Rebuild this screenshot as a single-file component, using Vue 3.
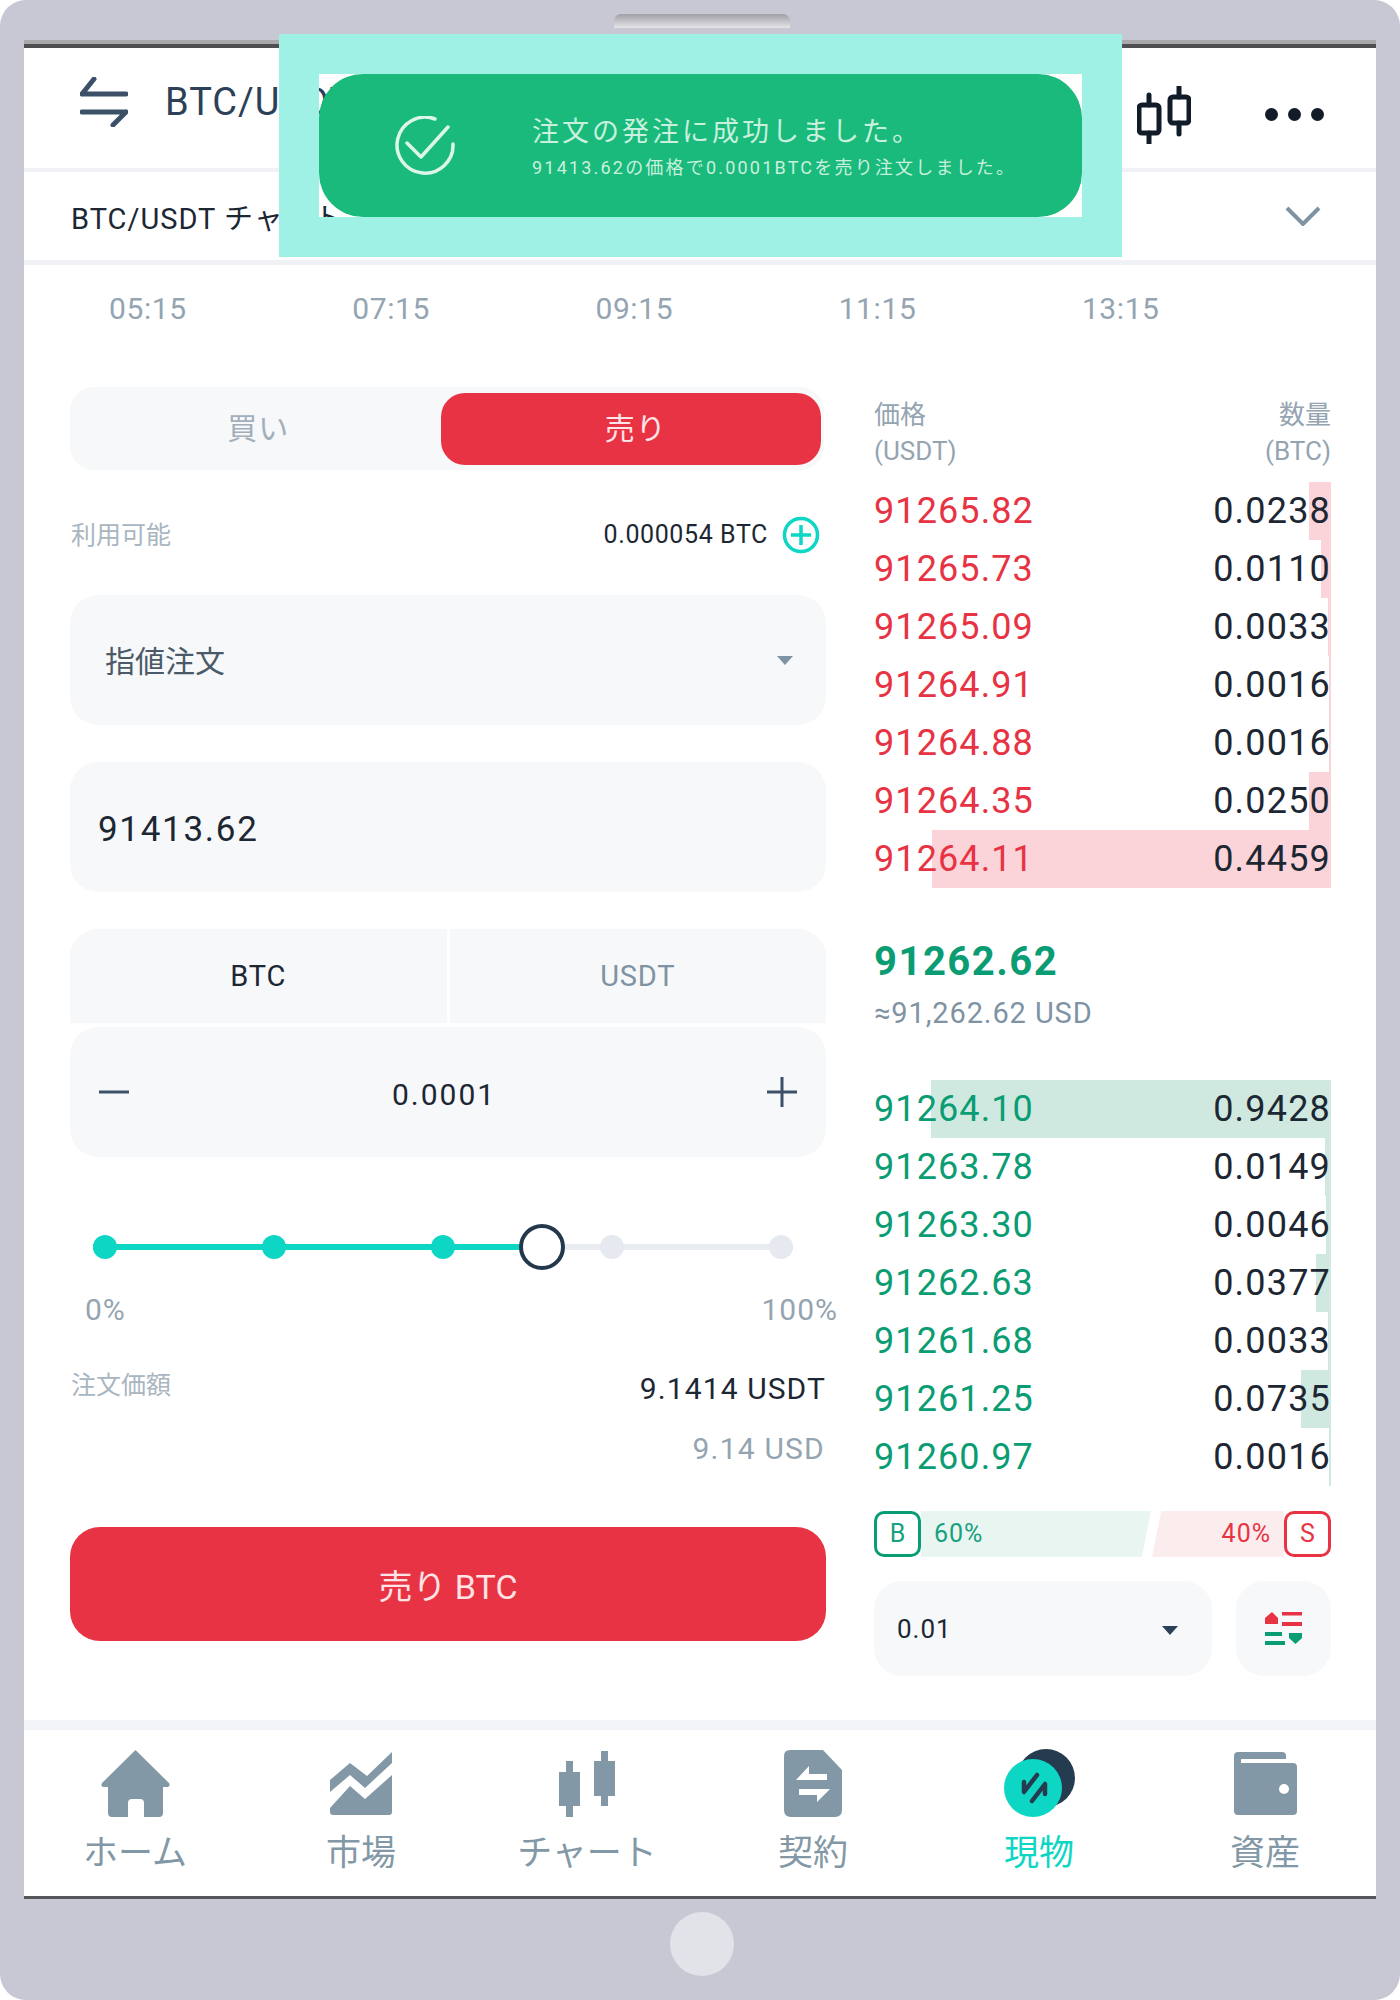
<template>
  <div class="device">
    <div class="notch"></div>

    <div class="screen">
      <header class="top-bar">
        <svg class="swap-icon" viewBox="0 0 48 50" width="48" height="50">
          <path d="M2 17L14 2M2 17H46M46 35H2M46 35L33 48" />
        </svg>
        <span class="pair">BTC/USDT</span>
        <svg class="candle-icon" viewBox="0 0 54 58" width="54" height="58">
          <rect x="2" y="19" width="20" height="28" rx="3" />
          <rect x="33" y="11" width="19" height="26" rx="3" />
          <path d="M12 9V19M12 47V57M42 1V11M42 37V48" />
        </svg>
        <div class="dots"><i></i><i></i><i></i></div>
      </header>

      <div class="chart-row">
        <span>BTC/USDT チャート</span>
        <svg viewBox="0 0 36 20" width="36" height="20">
          <path d="M2 2L18 18L34 2" />
        </svg>
      </div>

      <div class="times">
        <span v-for="t in times" :key="t">{{ t }}</span>
      </div>

      <main class="trade">
        <section class="form">
          <div class="side-tabs">
            <span class="side">買い</span>
            <span class="side active">売り</span>
          </div>

          <div class="avail">
            <span class="muted">利用可能</span>
            <div class="avail-right">
              <span>0.000054 BTC</span>
              <svg viewBox="0 0 38 38" width="38" height="38">
                <circle cx="19" cy="19" r="16.5" />
                <path d="M19 9V29M9 19H29" />
              </svg>
            </div>
          </div>

          <div class="field select">
            <span>指値注文</span>
            <i class="caret grey"></i>
          </div>

          <div class="field price">91413.62</div>

          <div class="unit-tabs">
            <span>BTC</span>
            <span class="off">USDT</span>
          </div>

          <div class="field qty">
            <svg viewBox="0 0 30 30" width="30" height="30"><path d="M0 15H30" /></svg>
            <span>0.0001</span>
            <svg viewBox="0 0 30 30" width="30" height="30"><path d="M0 15H30M15 0V30" /></svg>
          </div>

          <div class="slider">
            <div class="track"></div>
            <div class="track fill" :style="{ width: sliderPos + 'px' }"></div>
            <i
              v-for="(on, i) in sliderDots"
              :key="i"
              :class="['dot', { on }]"
            ></i>
            <i class="thumb" :style="{ left: sliderPos + 'px' }"></i>
          </div>
          <div class="slider-labels">
            <span>0%</span>
            <span>100%</span>
          </div>

          <div class="total">
            <span class="muted">注文価額</span>
            <span class="total-value">9.1414 USDT</span>
          </div>
          <div class="total-usd">9.14 USD</div>

          <button class="sell-btn">売り BTC</button>
        </section>

        <section class="book">
          <div class="book-head">
            <div>価格<br />(USDT)</div>
            <div class="right">数量<br />(BTC)</div>
          </div>

          <div
            v-for="row in asks"
            :key="row.price"
            class="book-row ask"
          >
            <i class="bar" :style="{ width: row.bar + 'px' }"></i>
            <span class="p">{{ row.price }}</span>
            <span class="q">{{ row.qty }}</span>
          </div>

          <div class="mid">
            <div class="mid-price">91262.62</div>
            <div class="mid-usd">≈91,262.62 USD</div>
          </div>

          <div
            v-for="row in bids"
            :key="row.price"
            class="book-row bid"
          >
            <i class="bar" :style="{ width: row.bar + 'px' }"></i>
            <span class="p">{{ row.price }}</span>
            <span class="q">{{ row.qty }}</span>
          </div>

          <div class="ratio">
            <span class="badge b">B</span>
            <div class="ratio-buy">60%</div>
            <div class="ratio-sell">40%</div>
            <span class="badge s">S</span>
          </div>

          <div class="book-controls">
            <div class="depth">
              <span>0.01</span>
              <i class="caret dark"></i>
            </div>
            <div class="layout-btn">
              <svg viewBox="0 0 38 33" width="38" height="33">
                <path class="red" d="M7 0L13 6V12H0V6Z" />
                <path class="red" d="M17 0H37V3.5H17ZM17 10H37V14H17Z" />
                <path class="green" d="M0 20H17V24H0ZM0 29H20V33H0Z" />
                <path class="green" d="M24 21H37V26L30.5 32L24 26Z" />
              </svg>
            </div>
          </div>
        </section>
      </main>

      <nav class="tabbar">
        <div v-for="tab in tabs" :key="tab.label" :class="['tab', { current: tab.current }]">
          <div class="tab-icon">
            <svg v-if="tab.icon === 'home'" viewBox="0 0 69 67" width="69" height="67">
              <path class="fill" d="M34.5 0L68 33Q70 37 65 37H62V63Q62 67 58 67H43V53Q43 49 39 49H31Q27 49 27 53V67H11Q7 67 7 63V37H4Q-1 37 1 33Z" />
            </svg>
            <svg v-else-if="tab.icon === 'market'" viewBox="0 0 62 63" width="62" height="63">
              <path class="fill" d="M0 28L20 11L37 24L62 0V11L35 36L20 23L0 40Z" />
              <path class="fill" d="M0 56L20 34L35 47L62 23V60Q62 63 59 63H3Q0 63 0 60Z" />
            </svg>
            <svg v-else-if="tab.icon === 'chart'" viewBox="0 0 56 66" width="56" height="66">
              <path class="fill" d="M7 10H14V21H21V55H14V66H7V55H0V21H7ZM42 0H49V10H56V45H49V55H42V45H35V10H42Z" />
            </svg>
            <svg v-else-if="tab.icon === 'contract'" viewBox="0 0 58 67" width="58" height="67">
              <path class="fill" d="M6 0H39L58 20V60Q58 67 51 67H7Q0 67 0 60V6Q0 0 6 0Z" />
              <path fill="#fff" d="M25 16V24H43V30H12ZM15 39H46L33 52V45H15Z" />
            </svg>
            <svg v-else-if="tab.icon === 'spot'" viewBox="0 0 71 69" width="71" height="69">
              <circle cx="42" cy="29" r="29" fill="#253c50" />
              <circle cx="29" cy="39" r="29" fill="#0dd6c4" />
              <path class="spot-arrows" d="M33 26L20 43V33M28 52L41 35V45" />
            </svg>
            <svg v-else viewBox="0 0 63 63" width="63" height="63">
              <path class="fill" d="M4 0H48Q52 0 52 4V7H7V11H59Q63 11 63 15V59Q63 63 59 63H4Q0 63 0 59V4Q0 0 4 0Z" />
              <circle cx="50" cy="37" r="5" fill="#fff" />
            </svg>
          </div>
          <span>{{ tab.label }}</span>
        </div>
      </nav>
    </div>

    <div class="home-btn"></div>

    <!-- Toast, the ring is opaque and the hole shows what's beneath -->
    <div class="toast-ring">
      <div class="toast">
        <svg class="check" viewBox="0 0 60 60" width="60" height="60">
          <path d="M40 3A28 28 0 1 0 58 28M12 27L26 41L53 11" />
        </svg>
        <div class="toast-text">
          <div class="toast-title">注文の発注に成功しました。</div>
          <div class="toast-sub">91413.62の価格で0.0001BTCを売り注文しました。</div>
        </div>
      </div>
    </div>
  </div>
</template>

<script setup>
const times = ["05:15", "07:15", "09:15", "11:15", "13:15"];

const asks = [
  { price: "91265.82", qty: "0.0238", bar: 22 },
  { price: "91265.73", qty: "0.0110", bar: 10 },
  { price: "91265.09", qty: "0.0033", bar: 3 },
  { price: "91264.91", qty: "0.0016", bar: 2 },
  { price: "91264.88", qty: "0.0016", bar: 2 },
  { price: "91264.35", qty: "0.0250", bar: 22 },
  { price: "91264.11", qty: "0.4459", bar: 399 },
];

const bids = [
  { price: "91264.10", qty: "0.9428", bar: 400 },
  { price: "91263.78", qty: "0.0149", bar: 6 },
  { price: "91263.30", qty: "0.0046", bar: 5 },
  { price: "91262.63", qty: "0.0377", bar: 15 },
  { price: "91261.68", qty: "0.0033", bar: 3 },
  { price: "91261.25", qty: "0.0735", bar: 30 },
  { price: "91260.97", qty: "0.0016", bar: 2 },
];

const sliderPos = 449;
const sliderDots = [true, true, true, false, false];

const tabs = [
  { label: "ホーム", icon: "home" },
  { label: "市場", icon: "market" },
  { label: "チャート", icon: "chart" },
  { label: "契約", icon: "contract" },
  { label: "現物", icon: "spot", current: true },
  { label: "資産", icon: "wallet" },
];
</script>

<style>
body {
  background: #fff;
}
</style>

<style scoped>
.device {
  position: relative;
  width: 1400px;
  height: 2000px;
  box-sizing: border-box;
  padding: 40px 24px 0;
  background: #c7c8d4;
  border-radius: 26px;
  font-family: Roboto, "Noto Sans CJK JP", sans-serif;
  color: #1d2733;
}

.notch {
  position: absolute;
  top: 14px;
  left: 614px;
  width: 176px;
  height: 14px;
  border-radius: 7px 7px 0 0;
  background: linear-gradient(to bottom, #9f9fa5, #e4e4e8);
}

.screen {
  background: #fff;
  border-top: 4px solid #a9a9ad;
  border-bottom: 3px solid #55555a;
  position: relative;
}
.screen::before {
  content: "";
  display: block;
  height: 4px;
  background: #4f4f52;
}

/* Top bar */
.top-bar {
  display: flex;
  align-items: center;
  height: 120px;
  padding: 0 52px 0 56px;
  border-bottom: 4px solid #eff1f5;
}
.swap-icon {
  margin-bottom: 12px;
}
.swap-icon path {
  fill: none;
  stroke: #3c5168;
  stroke-width: 5;
  stroke-linecap: round;
  stroke-linejoin: round;
}
.pair {
  margin: 0 0 12px 37px;
  font-size: 38px;
  letter-spacing: 1px;
  color: #2c4157;
}
.candle-icon {
  margin: 14px 0 0 auto;
}
.candle-icon rect,
.candle-icon path {
  fill: none;
  stroke: #111c28;
  stroke-width: 5;
  stroke-linecap: round;
}
.dots {
  display: flex;
  gap: 10px;
  margin: 12px 0 0 74px;
}
.dots i {
  width: 13px;
  height: 13px;
  border-radius: 50%;
  background: #111c28;
}

.chart-row {
  display: flex;
  justify-content: space-between;
  align-items: center;
  height: 88px;
  padding: 0 55px 0 47px;
  border-bottom: 5px solid #eff1f5;
  font-size: 29px;
  letter-spacing: 1px;
}
.chart-row path {
  fill: none;
  stroke: #7f93a3;
  stroke-width: 4;
}

.times {
  display: flex;
  gap: 165.5px;
  height: 122px;
  box-sizing: border-box;
  padding: 24px 0 0 85px;
  font-size: 30px;
  line-height: 40px;
  letter-spacing: 0.6px;
  color: #94a4b1;
}

/* Main area */
.trade {
  display: flex;
  gap: 48px;
  height: 1343px;
  box-sizing: border-box;
  padding: 0 45px 0 46px;
  border-bottom: 10px solid #f2f4f8;
}

.form {
  width: 756px;
  flex: none;
}
.muted {
  font-size: 25px;
  color: #a9b5bf;
}

.side-tabs {
  display: flex;
  justify-content: space-between;
  align-items: center;
  width: 754px;
  height: 83px;
  box-sizing: border-box;
  padding: 0 3px 0 0;
  border-radius: 24px;
  background: #f6f8fa;
  font-size: 30px;
  letter-spacing: 1px;
}
.side {
  width: 372px;
  height: 72px;
  box-sizing: border-box;
  padding-left: 6px;
  line-height: 72px;
  text-align: center;
  color: #a2afba;
}
.side.active {
  width: 382px;
  padding-left: 10px;
  border-radius: 24px;
  background: #e73343;
  color: #ffe3e5;
}

.avail {
  display: flex;
  justify-content: space-between;
  align-items: center;
  height: 125px;
  padding: 1px 6px 0 0;
  box-sizing: border-box;
}
.avail .muted {
  margin-left: 1px;
}
.avail-right {
  display: flex;
  align-items: center;
  gap: 14px;
  margin-top: 3px;
  font-size: 25px;
  letter-spacing: 0.6px;
}
.avail-right circle,
.avail-right path {
  fill: none;
  stroke: #0dd6c4;
  stroke-width: 3.5;
}

.field {
  display: flex;
  align-items: center;
  height: 130px;
  border-radius: 28px;
  background: #f6f8fa;
}
.select {
  justify-content: space-between;
  padding: 0 33px 2px 35px;
  box-sizing: border-box;
  font-size: 30px;
  color: #4a5a68;
}
.caret {
  width: 0;
  height: 0;
  border-left: 8px solid transparent;
  border-right: 8px solid transparent;
  border-top: 9px solid;
}
.caret.grey {
  margin-top: 2px;
  color: #7f93a3;
}
.caret.dark {
  margin-top: 4px;
  color: #2c4157;
}
.price {
  box-sizing: border-box;
  margin-top: 37px;
  padding: 5px 0 0 28px;
  font-size: 35px;
  letter-spacing: 1.7px;
}

.unit-tabs {
  display: flex;
  gap: 3px;
  height: 94px;
  margin-top: 37px;
  font-size: 29px;
  line-height: 94px;
  letter-spacing: 0.8px;
  text-align: center;
}
.unit-tabs span {
  flex: 1;
  background: #f6f8fa;
}
.unit-tabs span:first-child {
  border-top-left-radius: 28px;
}
.unit-tabs span:last-child {
  border-top-right-radius: 28px;
}
.unit-tabs .off {
  color: #7f93a3;
}

.qty {
  justify-content: space-between;
  margin-top: 4px;
  padding: 0 29px;
  font-size: 30px;
  letter-spacing: 2px;
}
.qty span {
  margin-left: -8px;
  padding-top: 4px;
}
.qty path {
  fill: none;
  stroke: #3c5168;
  stroke-width: 3;
}

.slider {
  position: relative;
  display: flex;
  justify-content: space-between;
  align-items: center;
  height: 46px;
  margin: 67px 33px 0 23px;
}
.track {
  position: absolute;
  left: 0;
  right: 0;
  top: 20px;
  height: 6px;
  background: #e9ecf1;
}
.track.fill {
  right: auto;
  background: #0dd6c4;
}
.dot {
  position: relative;
  width: 24px;
  height: 24px;
  border-radius: 50%;
  background: #e6e9ef;
}
.dot.on {
  background: #0dd6c4;
}
.thumb {
  position: absolute;
  top: 0;
  width: 46px;
  height: 46px;
  box-sizing: border-box;
  border: 4px solid #24384d;
  border-radius: 50%;
  background: #fff;
  transform: translateX(-23px);
}
.slider-labels {
  display: flex;
  justify-content: space-between;
  margin: 20px -12px 0 15px;
  font-size: 30px;
  line-height: 40px;
  letter-spacing: 1px;
  color: #94a4b1;
}

.total {
  display: flex;
  justify-content: space-between;
  align-items: flex-start;
  margin-top: 36px;
  line-height: 40px;
}
.total .muted {
  margin-left: 1px;
}
.total-value {
  padding-top: 3px;
  font-size: 30px;
  letter-spacing: 1.1px;
}
.total-usd {
  margin-top: 20px;
  padding-right: 1px;
  font-size: 30px;
  line-height: 40px;
  letter-spacing: 1.2px;
  text-align: right;
  color: #94a4b1;
}

.sell-btn {
  display: block;
  width: 756px;
  height: 114px;
  margin-top: 58px;
  border: 0;
  border-radius: 30px;
  background: #e73343;
  font-family: inherit;
  font-size: 34px;
  color: #ffe3e5;
}

/* Order book */
.book {
  flex: 1;
  min-width: 0;
}
.book-head {
  display: flex;
  justify-content: space-between;
  height: 95px;
  padding-top: 10px;
  box-sizing: border-box;
  font-size: 26px;
  line-height: 36px;
  color: #94a4b1;
}
.book-head .right {
  text-align: right;
}
.book-row {
  position: relative;
  display: flex;
  justify-content: space-between;
  align-items: center;
  height: 58px;
  font-size: 36px;
  letter-spacing: 1.1px;
}
.book-row .bar {
  position: absolute;
  top: 0;
  right: 0;
  bottom: 0;
}
.book-row span {
  position: relative;
}
.book-row .q {
  letter-spacing: 1.2px;
}
.ask .p {
  color: #e73343;
}
.ask .bar {
  background: #fad4d8;
}
.bid .p {
  color: #0a9c73;
}
.bid .bar {
  background: #cfe9e0;
}

.mid {
  height: 192px;
  box-sizing: border-box;
  padding-top: 49px;
}
.mid-price {
  font-size: 40px;
  font-weight: 700;
  line-height: 50px;
  letter-spacing: 1.5px;
  color: #0a9c73;
}
.mid-usd {
  margin-top: 6px;
  font-size: 29px;
  line-height: 40px;
  letter-spacing: 0.9px;
  color: #7f93a3;
}

.ratio {
  display: flex;
  align-items: stretch;
  height: 46px;
  margin-top: 25px;
  font-size: 25px;
  line-height: 46px;
  letter-spacing: 1px;
}
.badge {
  flex: none;
  width: 47px;
  box-sizing: border-box;
  border: 3px solid;
  border-radius: 10px;
  background: #fff;
  line-height: 40px;
  text-align: center;
  letter-spacing: 0;
}
.badge.b {
  border-color: #0a9c73;
  color: #16a17f;
}
.badge.s {
  border-color: #e73343;
  color: #e73343;
}
.ratio-buy {
  width: 230px;
  box-sizing: border-box;
  padding-left: 13px;
  background: #e9f5f1;
  color: #16a17f;
  clip-path: polygon(0 0, 100% 0, 96% 100%, 0 100%);
}
.ratio-sell {
  flex: 1;
  margin-left: 1px;
  padding-right: 13px;
  background: #fbecee;
  color: #e73343;
  text-align: right;
  clip-path: polygon(7% 0, 100% 0, 100% 100%, 0 100%);
}

.book-controls {
  display: flex;
  justify-content: space-between;
  height: 95px;
  margin-top: 24px;
}
.depth {
  display: flex;
  justify-content: space-between;
  align-items: center;
  width: 338px;
  box-sizing: border-box;
  padding: 0 34px 0 23px;
  border-radius: 28px;
  background: #f6f8fa;
  font-size: 26px;
  letter-spacing: 1px;
}
.layout-btn {
  display: flex;
  align-items: center;
  justify-content: center;
  width: 95px;
  border-radius: 28px;
  background: #f6f8fa;
}
.layout-btn .red {
  fill: #e73343;
}
.layout-btn .green {
  fill: #0a9c73;
}

/* Bottom tabs */
.tabbar {
  display: flex;
  height: 166px;
  margin: 0 -2px;
}
.tab {
  flex: 1;
  display: flex;
  flex-direction: column;
  align-items: center;
  font-size: 35px;
  line-height: 44px;
  color: #8398a6;
}
.tab-icon {
  display: flex;
  align-items: center;
  justify-content: center;
  height: 69px;
  margin: 19px 0 14px;
}
.tab .fill {
  fill: #8398a6;
}
.tab.current {
  color: #0dd6c4;
}
.spot-arrows {
  fill: none;
  stroke: #253c50;
  stroke-width: 4.5;
  stroke-linecap: round;
  stroke-linejoin: round;
}

.home-btn {
  width: 64px;
  height: 64px;
  margin: 13px 0 0 646px;
  border-radius: 50%;
  background: #e2e3e9;
}

/* Toast */
.toast-ring {
  position: absolute;
  top: 34px;
  left: 279px;
  width: 843px;
  height: 223px;
  box-sizing: border-box;
  border: 40px solid #9ff1e5;
}
.toast {
  display: flex;
  align-items: center;
  height: 100%;
  box-sizing: border-box;
  padding: 0 0 0 76px;
  border-radius: 44px;
  background: #19ba7b;
}
.check path {
  fill: none;
  stroke: #ddf6ea;
  stroke-width: 3.5;
  stroke-linecap: round;
  stroke-linejoin: round;
}
.toast-text {
  margin-left: 77px;
  color: #c9f0de;
}
.toast-title {
  padding-top: 2px;
  font-size: 27px;
  line-height: 40px;
  letter-spacing: 3px;
}
.toast-sub {
  margin-top: 2px;
  font-size: 18px;
  line-height: 28px;
  letter-spacing: 2.2px;
}
</style>
